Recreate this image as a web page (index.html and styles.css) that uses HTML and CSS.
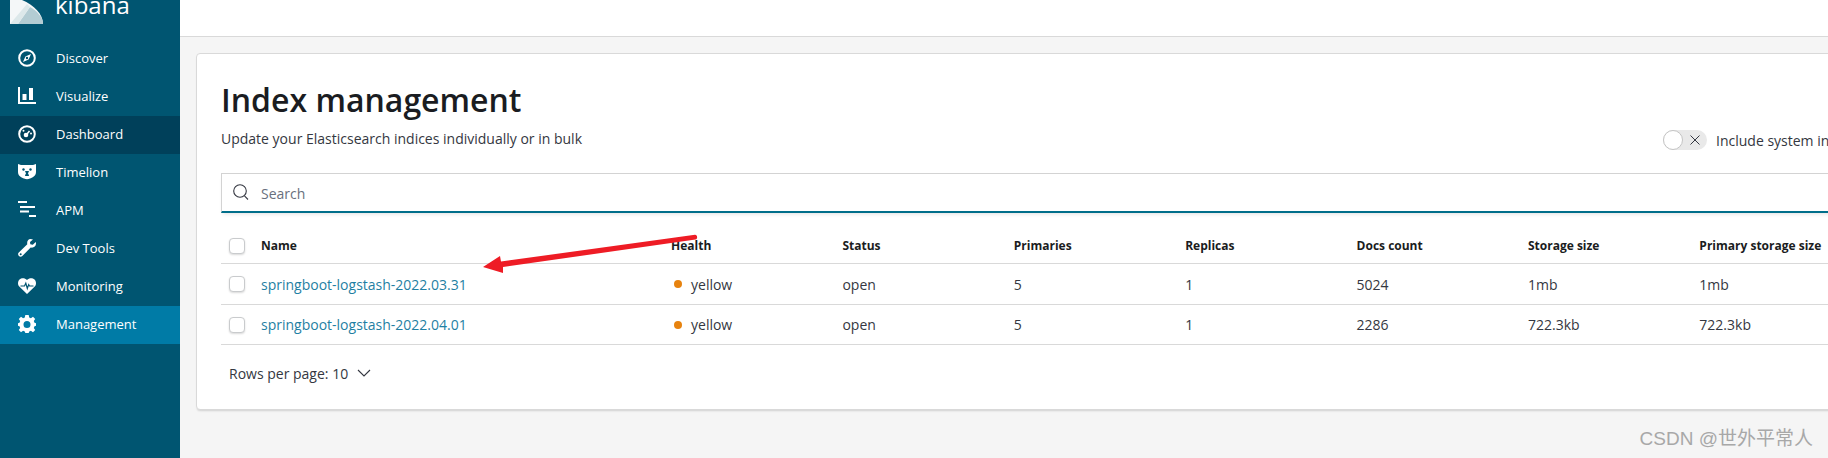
FILE: index.html
```html
<!DOCTYPE html>
<html lang="en">
<head>
<meta charset="utf-8">
<title>Index management - Kibana</title>
<link rel="stylesheet" href="styles.css">
</head>
<body>
<div class="shell">
  <aside class="sidebar">
    <div class="brand">
      <svg class="brand-mark" width="34" height="24" viewBox="0 0 34 24">
        <path d="M0 24V0H12C24 5 33 14 33 24Z" fill="#f4f7f8"/>
        <path d="M8 24 20 7C27 11 33 17 33 24Z" fill="#b3ccd3"/>
        <path d="M0 24 17 4 20 7 8 24Z" fill="#dce8ea"/>
      </svg>
      <span class="brand-name">kibana</span>
    </div>
    <nav class="nav">
      <a class="nav-item">
        <svg class="nav-icon" viewBox="0 0 18 18"><circle cx="9" cy="9" r="7.8" fill="none" stroke="#fff" stroke-width="2"/><path d="M13 5 10.6 10.6 5 13 7.4 7.4ZM9 7.8A1.2 1.2 0 1 0 9 10.2 1.2 1.2 0 0 0 9 7.8Z" fill="#fff" fill-rule="evenodd"/></svg>
        <span>Discover</span>
      </a>
      <a class="nav-item">
        <svg class="nav-icon" viewBox="0 0 18 18"><path d="M0 0H2V15H18V17H0Z" fill="#fff"/><path d="M4.500 7H8.500V13H4.500ZM11 1H15V13H11Z" fill="#fff"/></svg>
        <span>Visualize</span>
      </a>
      <a class="nav-item nav-item-current">
        <svg class="nav-icon" viewBox="0 0 18 18"><circle cx="9" cy="9" r="7.8" fill="none" stroke="#fff" stroke-width="2"/><circle cx="8" cy="10" r="2.300" fill="#fff"/><path d="M9 9 11.500 6" stroke="#fff" stroke-width="1.500"/><circle cx="5.500" cy="5.800" r="1" fill="#fff"/><circle cx="13" cy="8.500" r="1" fill="#fff"/></svg>
        <span>Dashboard</span>
      </a>
      <a class="nav-item">
        <svg class="nav-icon" viewBox="0 0 18 18"><path d="M0 1 3 2H15L18 1V9C18 13 14 15 12 15.500 10 16.500 8 16.500 6 15.500 4 15 0 13 0 9Z" fill="#fff"/><circle cx="5.500" cy="6.500" r="1.200" fill="#005571"/><circle cx="12.500" cy="6.500" r="1.200" fill="#005571"/><path d="M7 8H11L10 10.500C10.700 11.200 11 12 11 13H7C7 12 7.300 11.200 8 10.500Z" fill="#005571"/></svg>
        <span>Timelion</span>
      </a>
      <a class="nav-item">
        <svg class="nav-icon" viewBox="0 0 18 18"><path d="M0 0H9V2H0ZM2 5H17V7H2ZM2 9.500H11V11.500H2ZM11 14H18V16H11Z" fill="#fff"/></svg>
        <span>APM</span>
      </a>
      <a class="nav-item">
        <svg class="nav-icon" viewBox="0 0 18 18"><path d="M12.500 0C10 0 8.700 2.500 9.300 5.200L.8 13.400C-.3 14.500-.1 16.300 1.200 17.200 2.200 17.900 3.500 17.700 4.300 16.900L12.700 8.600C15.500 9.200 18 7.500 18 4.600 18 4 17.900 3.400 17.700 3L14.800 5.700 12.300 5.300 12 2.900 15 .6C14.200.2 13.400 0 12.500 0Z" fill="#fff"/><circle cx="2.700" cy="15.200" r="1" fill="#005571"/></svg>
        <span>Dev Tools</span>
      </a>
      <a class="nav-item">
        <svg class="nav-icon" viewBox="0 0 18 18"><path d="M9 17 1.500 9.800C-.5 7.800-.5 4.600 1.500 2.600 3.500.6 6.800.7 9 3 11.200.7 14.500.6 16.500 2.600 18.500 4.600 18.500 7.800 16.500 9.800Z" fill="#fff"/><path d="M2.500 9H6.500L7.800 6.200 9.300 11.500 10.700 7.600 11.500 9H15.500" fill="none" stroke="#005571" stroke-width="1.200"/></svg>
        <span>Monitoring</span>
      </a>
      <a class="nav-item nav-item-active">
        <svg class="nav-icon" viewBox="0 0 18 18"><path d="M7.300 0H10.700L11.200 2.500 12.900 3.200 15 1.800 17.200 4 15.800 6.100 16.500 7.800 18 8.200V10.800L16.500 11.200 15.800 12.900 17.200 15 15 17.200 12.900 15.800 11.200 16.500 10.700 18H7.300L6.800 16.500 5.100 15.800 3 17.200.8 15 2.200 12.900 1.500 11.200 0 10.800V8.200L1.500 7.800 2.200 6.100.8 4 3 1.800 5.100 3.200 6.800 2.500ZM9 6A3.500 3.500 0 1 0 9 13 3.500 3.500 0 0 0 9 6Z" fill="#fff" fill-rule="evenodd"/></svg>
        <span>Management</span>
      </a>
    </nav>
  </aside>

  <div class="content">
    <header class="topbar"></header>
    <main class="main">
      <section class="panel">
        <div class="panel-head">
          <div>
            <h1 class="title">Index management</h1>
            <p class="subtitle">Update your Elasticsearch indices individually or in bulk</p>
          </div>
          <div class="switch-field">
            <span class="switch">
              <span class="switch-knob"></span>
              <svg class="switch-x" width="10" height="10" viewBox="0 0 10 10"><path d="M.5.5 9.500 9.500M9.500.5.5 9.500" stroke="#343741" stroke-width="1"/></svg>
            </span>
            <span class="switch-label">Include system indices</span>
          </div>
        </div>

        <div class="search">
          <svg class="search-icon" width="16" height="16" viewBox="0 0 16 16"><circle cx="7" cy="7" r="6.300" fill="none" stroke="#343741" stroke-width="1.100"/><path d="M11.500 11.800 15 15.500" stroke="#343741" stroke-width="1.100"/></svg>
          <span class="search-placeholder">Search</span>
        </div>

        <div class="table">
          <div class="row row-head">
            <span class="cell-check"><span class="checkbox"></span></span>
            <span>Name</span><span>Health</span><span>Status</span><span>Primaries</span><span>Replicas</span><span>Docs count</span><span>Storage size</span><span>Primary storage size</span>
          </div>
          <div class="row row-first">
            <span class="cell-check"><span class="checkbox"></span></span>
            <a class="index-link">springboot-logstash-2022.03.31</a>
            <span class="health"><i class="dot"></i>yellow</span>
            <span>open</span><span>5</span><span>1</span><span>5024</span><span>1mb</span><span>1mb</span>
          </div>
          <div class="row">
            <span class="cell-check"><span class="checkbox"></span></span>
            <a class="index-link">springboot-logstash-2022.04.01</a>
            <span class="health"><i class="dot"></i>yellow</span>
            <span>open</span><span>5</span><span>1</span><span>2286</span><span>722.3kb</span><span>722.3kb</span>
          </div>
        </div>

        <div class="pager">
          <span>Rows per page: 10</span>
          <svg width="14" height="8" viewBox="0 0 14 8"><path d="M1 1 7 7 13 1" fill="none" stroke="#343741" stroke-width="1.100"/></svg>
        </div>
      </section>
    </main>
  </div>

  <!-- Hand-drawn red arrow pointing at the first index -->
  <svg class="annotation" width="220" height="46" viewBox="0 0 220 46">
    <path d="M3 37 20 26 21 31.500 215 4.800C217.500 4.800 218 9 215.500 9.500L23 37 23 43Z" fill="#ee1c25"/>
  </svg>
  <div class="watermark">CSDN @世外平常人</div>
</div>
</body>
</html>
```

FILE: styles.css
```css
* { box-sizing: border-box; }

html, body {
  margin: 0;
  height: 100%;
  overflow: hidden;
}

body {
  font-family: "Open Sans", "Noto Sans", sans-serif;
  font-size: 14px;
  color: #343741;
  background: #f5f5f5;
}

.shell {
  position: relative;
  display: flex;
  width: 1828px;
  height: 458px;
  overflow: hidden;
}

/* Sidebar */
.sidebar {
  flex: 0 0 180px;
  background: #005571;
  color: #fff;
}

.brand {
  display: flex;
  height: 40px;
  padding-left: 10px;
  gap: 11px;
  overflow: hidden;
}

.brand-mark { flex: none; }

.brand-name {
  font-size: 24px;
  font-weight: 500;
  line-height: 26px;
  margin-top: -8px;
  height: 26px;
}

.nav-item {
  display: flex;
  align-items: center;
  height: 38px;
  padding: 0 0 3px 18px;
  gap: 20px;
  font-size: 13px;
  color: #fff;
}

.nav-item-current { background: #00405a; }
.nav-item-active { background: #007ba6; }

.nav-icon {
  width: 18px;
  height: 18px;
  flex: none;
}

/* Main area */
.content {
  flex: 1;
  min-width: 0;
}

.topbar {
  height: 37px;
  background: #fff;
  border-bottom: 1px solid #d9d9d9;
}

.main { padding: 16px 0 0 16px; }

.panel {
  width: 1720px;
  height: 357px;
  padding: 24px 24px 0;
  background: #fff;
  border: 1px solid #d9d9d9;
  border-radius: 4px;
  box-shadow: 0 2px 2px -1px rgba(0, 0, 0, .15);
}

.panel-head {
  display: flex;
  height: 95px;
}

.title {
  margin: 0;
  font-size: 32px;
  font-weight: 600;
  line-height: 44px;
  color: #1a1c21;
}

.subtitle {
  margin: 7px 0 0;
  line-height: 20px;
  color: #343741;
}

.switch-field {
  display: flex;
  align-items: center;
  gap: 9px;
  width: 228px;
  height: 20px;
  margin: 52px 0 0 auto;
  white-space: nowrap;
}

.switch {
  display: flex;
  align-items: center;
  flex: none;
  width: 44px;
  height: 20px;
  border-radius: 10px;
  background: #e9e9e9;
}

.switch-knob {
  width: 20px;
  height: 20px;
  border-radius: 50%;
  background: #fff;
  border: 1px solid #c4c4c4;
}

.switch-x { margin-left: 7px; }

/* Search field */
.search {
  display: flex;
  align-items: center;
  height: 40px;
  padding: 1px 0 0 11px;
  gap: 12px;
  background: #fff;
  border: 1px solid #d3d3d3;
  border-bottom: 2px solid #006e8a;
  box-shadow: 0 3px 4px -2px rgba(0, 0, 0, .12);
}

.search-icon { margin-top: -2px; }

.search-placeholder { color: #69707d; }

/* Index table */
.table { margin-top: 13px; }

.row {
  display: grid;
  grid-template-columns: 40px 410px repeat(7, 171.4px);
  align-items: center;
  height: 40px;
  border-bottom: 1px solid #d9d9d9;
}

.row-head {
  height: 38px;
  padding-top: 2px;
  font-size: 12px;
  font-weight: 700;
  color: #1a1c21;
}

.row-first { height: 41px; }

.cell-check {
  display: flex;
  padding-left: 8px;
}

.checkbox {
  width: 16px;
  height: 16px;
  border: 1px solid #c9cbcd;
  border-radius: 4px;
  background: #fff;
  box-shadow: 0 1px 2px rgba(0, 0, 0, .15);
}

.index-link { color: #1f7fa3; }

.health {
  display: flex;
  align-items: center;
  gap: 9px;
  padding-left: 3px;
}

.dot {
  width: 8px;
  height: 8px;
  border-radius: 50%;
  background: #e7830f;
}

.pager {
  display: flex;
  align-items: center;
  gap: 9px;
  height: 20px;
  margin: 18px 0 0 8px;
}

/* Overlays */
.annotation {
  position: absolute;
  left: 480px;
  top: 230px;
}

.watermark {
  position: absolute;
  right: 15px;
  top: 427px;
  font-family: "Liberation Sans", "Noto Sans CJK SC", sans-serif;
  font-size: 19px;
  line-height: 24px;
  color: #a8a8a8;
}
```
